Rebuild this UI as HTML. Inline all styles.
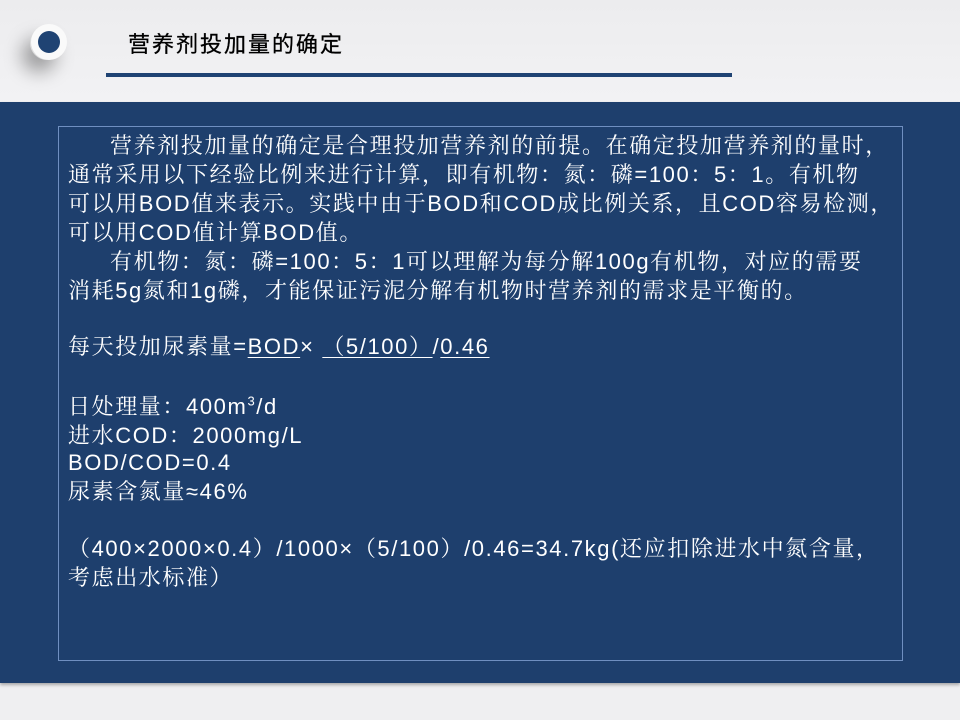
<!DOCTYPE html>
<html><head><meta charset="utf-8"><style>
body{margin:0;width:960px;height:720px;position:relative;overflow:hidden;background:#efeff1;font-family:"Liberation Sans","Noto Serif CJK SC",serif;}
.hdr{position:absolute;left:0;top:0;width:960px;height:102px;background:linear-gradient(180deg,#ececee,#f2f2f4);}
.sh{position:absolute;left:30px;top:26px;width:34px;height:34px;border-radius:50%;background:#ddd;box-shadow:-8px 12px 18px rgba(0,0,0,0.35);}
.c1{position:absolute;left:31px;top:24px;width:36px;height:36px;border-radius:50%;background:#fafafa;}
.c2{position:absolute;left:38px;top:31px;width:22px;height:22px;border-radius:50%;background:#1f4373;}
.title{position:absolute;left:128px;top:32px;font-size:22px;line-height:26px;letter-spacing:2px;color:#000;font-family:"Liberation Sans","Noto Sans CJK SC",sans-serif;-webkit-text-stroke:0.3px #000;}
.bar{position:absolute;left:106px;top:73px;width:626px;height:4px;background:#1f4373;}
.main{position:absolute;left:0;top:102px;width:960px;height:581px;background:#1e3f6d;box-shadow:0 2px 3px rgba(0,0,0,0.3);}
.box{position:absolute;left:58px;top:126px;width:843px;height:533px;border:1px solid #6f8fc0;}
.l{position:absolute;left:68px;color:#fff;font-size:22px;white-space:nowrap;line-height:26px;letter-spacing:1.6px;}
u{text-decoration:underline;text-underline-offset:3px;text-decoration-thickness:1px;}
sup{font-size:13px;line-height:0;}
</style></head><body>
<div class="hdr"></div>
<div class="sh"></div><div class="c1"></div><div class="c2"></div>
<div class="title">营养剂投加量的确定</div>
<div class="bar"></div>
<div class="main"></div>
<div class="box"></div>
<div class="l" style="top:133px;left:110px">营养剂投加量的确定是合理投加营养剂的前提。在确定投加营养剂的量时，</div>
<div class="l" style="top:162px">通常采用以下经验比例来进行计算，即有机物：氮：磷=100：5：1。有机物</div>
<div class="l" style="top:191px">可以用BOD值来表示。实践中由于BOD和COD成比例关系，且COD容易检测，</div>
<div class="l" style="top:220px">可以用COD值计算BOD值。</div>
<div class="l" style="top:249px;left:110px">有机物：氮：磷=100：5：1可以理解为每分解100g有机物，对应的需要</div>
<div class="l" style="top:278px">消耗5g氮和1g磷，才能保证污泥分解有机物时营养剂的需求是平衡的。</div>
<div class="l" style="top:334px">每天投加尿素量=<u>BOD</u>× <u>（5/100）</u>/<u>0.46</u></div>
<div class="l" style="top:394px">日处理量：400m<sup>3</sup>/d</div>
<div class="l" style="top:423px">进水COD：2000mg/L</div>
<div class="l" style="top:450px">BOD/COD=0.4</div>
<div class="l" style="top:479px">尿素含氮量≈46%</div>
<div class="l" style="top:536px">（400×2000×0.4）/1000×（5/100）/0.46=34.7kg(还应扣除进水中氮含量，</div>
<div class="l" style="top:565px">考虑出水标准）</div>
</body></html>
